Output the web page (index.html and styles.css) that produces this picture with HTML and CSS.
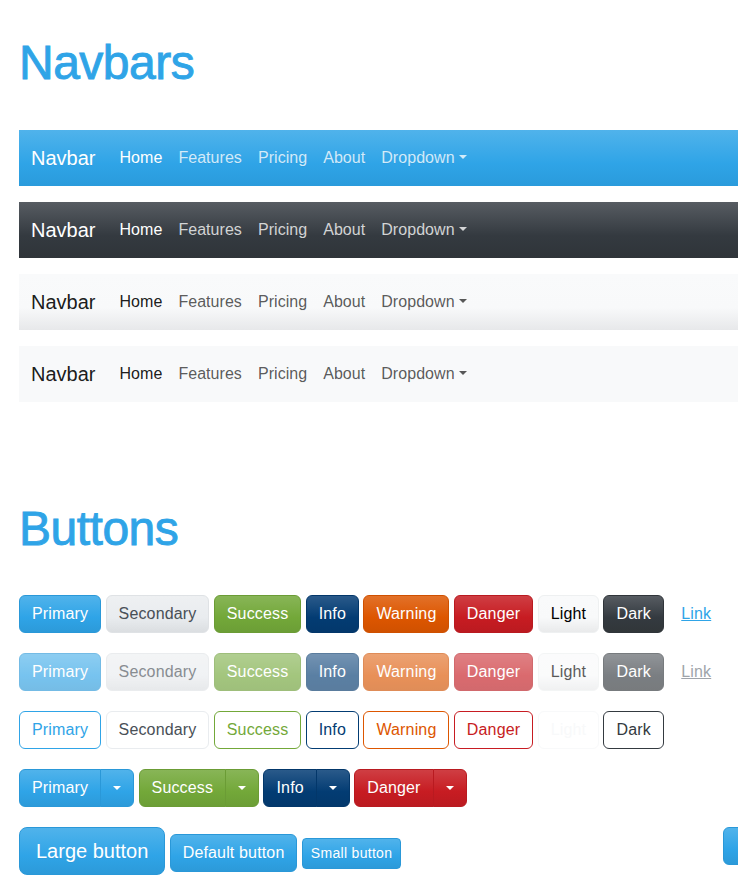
FILE: index.html
```html
<!DOCTYPE html>
<html lang="en">
<head>
<meta charset="utf-8">
<title>Cerulean preview</title>
<link rel="stylesheet" href="styles.css">
</head>
<body>
<div class="page">
  <section class="section">
    <h1 class="page-title">Navbars</h1>

    <nav class="navbar navbar-primary">
      <a class="navbar-brand" href="#">Navbar</a>
      <ul class="nav">
        <li><a class="nav-link active" href="#">Home</a></li>
        <li><a class="nav-link" href="#">Features</a></li>
        <li><a class="nav-link" href="#">Pricing</a></li>
        <li><a class="nav-link" href="#">About</a></li>
        <li><a class="nav-link dropdown-toggle" href="#">Dropdown</a></li>
      </ul>
    </nav>

    <nav class="navbar navbar-darkbg">
      <a class="navbar-brand" href="#">Navbar</a>
      <ul class="nav">
        <li><a class="nav-link active" href="#">Home</a></li>
        <li><a class="nav-link" href="#">Features</a></li>
        <li><a class="nav-link" href="#">Pricing</a></li>
        <li><a class="nav-link" href="#">About</a></li>
        <li><a class="nav-link dropdown-toggle" href="#">Dropdown</a></li>
      </ul>
    </nav>

    <nav class="navbar navbar-lightbg">
      <a class="navbar-brand" href="#">Navbar</a>
      <ul class="nav">
        <li><a class="nav-link active" href="#">Home</a></li>
        <li><a class="nav-link" href="#">Features</a></li>
        <li><a class="nav-link" href="#">Pricing</a></li>
        <li><a class="nav-link" href="#">About</a></li>
        <li><a class="nav-link dropdown-toggle" href="#">Dropdown</a></li>
      </ul>
    </nav>

    <nav class="navbar navbar-plainbg">
      <a class="navbar-brand" href="#">Navbar</a>
      <ul class="nav">
        <li><a class="nav-link active" href="#">Home</a></li>
        <li><a class="nav-link" href="#">Features</a></li>
        <li><a class="nav-link" href="#">Pricing</a></li>
        <li><a class="nav-link" href="#">About</a></li>
        <li><a class="nav-link dropdown-toggle" href="#">Dropdown</a></li>
      </ul>
    </nav>
  </section>

  <section class="section section-buttons">
    <h1 class="page-title">Buttons</h1>

    <div class="btn-row">
      <button type="button" class="btn btn-primary">Primary</button>
      <button type="button" class="btn btn-secondary">Secondary</button>
      <button type="button" class="btn btn-success">Success</button>
      <button type="button" class="btn btn-info">Info</button>
      <button type="button" class="btn btn-warning">Warning</button>
      <button type="button" class="btn btn-danger">Danger</button>
      <button type="button" class="btn btn-light">Light</button>
      <button type="button" class="btn btn-dark">Dark</button>
      <button type="button" class="btn btn-link">Link</button>
    </div>

    <div class="btn-row">
      <button type="button" class="btn btn-primary" disabled>Primary</button>
      <button type="button" class="btn btn-secondary" disabled>Secondary</button>
      <button type="button" class="btn btn-success" disabled>Success</button>
      <button type="button" class="btn btn-info" disabled>Info</button>
      <button type="button" class="btn btn-warning" disabled>Warning</button>
      <button type="button" class="btn btn-danger" disabled>Danger</button>
      <button type="button" class="btn btn-light" disabled>Light</button>
      <button type="button" class="btn btn-dark" disabled>Dark</button>
      <button type="button" class="btn btn-link" disabled>Link</button>
    </div>

    <div class="btn-row">
      <button type="button" class="btn btn-outline-primary">Primary</button>
      <button type="button" class="btn btn-outline-secondary">Secondary</button>
      <button type="button" class="btn btn-outline-success">Success</button>
      <button type="button" class="btn btn-outline-info">Info</button>
      <button type="button" class="btn btn-outline-warning">Warning</button>
      <button type="button" class="btn btn-outline-danger">Danger</button>
      <button type="button" class="btn btn-outline-light">Light</button>
      <button type="button" class="btn btn-outline-dark">Dark</button>
    </div>

    <div class="btn-row btn-row-groups">
      <div class="btn-group">
        <button type="button" class="btn btn-primary">Primary</button>
        <button type="button" class="btn btn-primary btn-split" aria-label="Toggle"></button>
      </div>
      <div class="btn-group">
        <button type="button" class="btn btn-success">Success</button>
        <button type="button" class="btn btn-success btn-split" aria-label="Toggle"></button>
      </div>
      <div class="btn-group">
        <button type="button" class="btn btn-info">Info</button>
        <button type="button" class="btn btn-info btn-split" aria-label="Toggle"></button>
      </div>
      <div class="btn-group">
        <button type="button" class="btn btn-danger">Danger</button>
        <button type="button" class="btn btn-danger btn-split" aria-label="Toggle"></button>
      </div>
    </div>

    <div class="sizes-row">
      <div class="col-main">
        <button type="button" class="btn btn-primary btn-lg">Large button</button>
        <button type="button" class="btn btn-primary">Default button</button>
        <button type="button" class="btn btn-primary btn-sm">Small button</button>
      </div>
      <div class="col-side">
        <button type="button" class="btn btn-primary btn-block">Block button</button>
      </div>
    </div>
  </section>
</div>
</body>
</html>
```
FILE: styles.css
```css
* { box-sizing: border-box; }

html, body {
  margin: 0;
  padding: 0;
  background: #fff;
}

body {
  font-family: "Liberation Sans", Arial, sans-serif;
  font-size: 16px;
  line-height: 1.5;
  color: #495057;
}

.page {
  width: 738px;
  overflow: hidden;
  padding: 2px 0 0 19px;
}

.page-title {
  margin: 0 0 6px;
  padding: 32px 0;
  font-size: 48px;
  font-weight: 500;
  line-height: 1.2;
  letter-spacing: -0.5px;
  color: #2fa4e7;
  -webkit-text-stroke: 0.9px #2fa4e7;
}

.section-buttons {
  margin-top: 66px;
}

/* Navbars */
.navbar {
  display: flex;
  align-items: center;
  width: 780px;
  height: 56px;
  padding: 8px 12px;
  margin-bottom: 16px;
}

.navbar-brand {
  font-size: 20px;
  line-height: 30px;
  padding: 5px 0;
  margin-right: 16px;
  text-decoration: none;
  text-shadow: 0 1px 0 rgba(0, 0, 0, 0.05);
}

.nav {
  display: flex;
  list-style: none;
  margin: 0;
  padding: 0;
}

.nav-link {
  display: block;
  padding: 8px;
  line-height: 24px;
  text-decoration: none;
  letter-spacing: 0.05px;
  text-shadow: 0 1px 0 rgba(0, 0, 0, 0.05);
}

.dropdown-toggle::after {
  content: "";
  display: inline-block;
  margin-left: 4px;
  vertical-align: 4px;
  border-top: 4.8px solid;
  border-left: 4.8px solid transparent;
  border-right: 4.8px solid transparent;
  border-bottom: 0;
}

.navbar-primary {
  background-image: linear-gradient(#50b3eb, #2fa4e7 60%, #2a9bdc);
}
.navbar-darkbg {
  background-image: linear-gradient(#575c62, #343a40 60%, #2f3439);
}
.navbar-primary .navbar-brand,
.navbar-darkbg .navbar-brand,
.navbar-primary .nav-link.active,
.navbar-darkbg .nav-link.active {
  color: #fff;
}
.navbar-primary .nav-link,
.navbar-darkbg .nav-link {
  color: rgba(255, 255, 255, 0.78);
}

.navbar-lightbg {
  background-image: linear-gradient(#f9fafb, #f8f9fa 60%, #e7e8ea);
}
.navbar-plainbg {
  background-color: #f8f9fa;
}
.navbar-lightbg .navbar-brand,
.navbar-plainbg .navbar-brand,
.navbar-lightbg .nav-link.active,
.navbar-plainbg .nav-link.active {
  color: rgba(0, 0, 0, 0.9);
}
.navbar-lightbg .nav-link,
.navbar-plainbg .nav-link {
  color: rgba(0, 0, 0, 0.65);
}

/* Buttons */
.btn-row {
  display: flex;
  align-items: center;
  gap: 4.4px;
  margin-bottom: 20px;
}

.btn {
  display: inline-block;
  font-family: inherit;
  font-size: 16px;
  font-weight: 400;
  line-height: 24px;
  letter-spacing: 0.15px;
  padding: 6px 12px;
  border: 1px solid transparent;
  border-radius: 6px;
  background-color: transparent;
  color: #fff;
  text-align: center;
  white-space: nowrap;
  cursor: pointer;
  text-shadow: 0 1px 0 rgba(0, 0, 0, 0.05);
}

.btn:disabled {
  opacity: 0.65;
  cursor: default;
}

.btn-primary {
  background-image: linear-gradient(#50b3eb, #2fa4e7 60%, #2c9ad9);
  border-color: #2a98d8;
  color: #fff;
}
.btn-secondary {
  background-image: linear-gradient(#eef0f2, #e9ecef 60%, #dbdee1);
  border-color: #dfe2e5;
  color: #495057;
}
.btn-success {
  background-image: linear-gradient(#88b557, #73a839 60%, #6c9e36);
  border-color: #6b9c35;
  color: #fff;
}
.btn-info {
  background-image: linear-gradient(#2a5a8a, #033c73 60%, #03386c);
  border-color: #03376a;
  color: #fff;
}
.btn-warning {
  background-image: linear-gradient(#e27129, #dd5600 60%, #d05100);
  border-color: #cf5000;
  color: #fff;
}
.btn-danger {
  background-image: linear-gradient(#cf3e43, #c71c22 60%, #bb1a20);
  border-color: #b91a20;
  color: #fff;
}
.btn-light {
  background-image: linear-gradient(#f9fafb, #f8f9fa 60%, #e9eaeb);
  border-color: #eef0f1;
  color: #000;
}
.btn-dark {
  background-image: linear-gradient(#575c62, #343a40 60%, #313639);
  border-color: #30353a;
  color: #fff;
}
.btn-link {
  color: #2fa4e7;
  text-decoration: underline;
  border-color: transparent;
  text-shadow: none;
}
.btn-link:disabled {
  color: #6c757d;
}

.btn-outline-primary { color: #2fa4e7; border-color: #2fa4e7; }
.btn-outline-secondary { color: #495057; border-color: #e9ecef; }
.btn-outline-success { color: #73a839; border-color: #73a839; }
.btn-outline-info { color: #033c73; border-color: #033c73; }
.btn-outline-warning { color: #dd5600; border-color: #dd5600; }
.btn-outline-danger { color: #c71c22; border-color: #c71c22; }
.btn-outline-light { color: #f8f9fa; border-color: #f8f9fa; }
.btn-outline-dark { color: #343a40; border-color: #343a40; }
.btn-outline-primary,
.btn-outline-secondary,
.btn-outline-success,
.btn-outline-info,
.btn-outline-warning,
.btn-outline-danger,
.btn-outline-light,
.btn-outline-dark {
  text-shadow: none;
}

.btn-group {
  display: inline-flex;
}
.btn-group > .btn:first-child {
  border-top-right-radius: 0;
  border-bottom-right-radius: 0;
}
.btn-split {
  margin-left: -1px;
  width: 34px;
  padding-left: 0;
  padding-right: 0;
  border-top-left-radius: 0;
  border-bottom-left-radius: 0;
}
.btn-split::after {
  content: "";
  display: inline-block;
  vertical-align: 3px;
  border-top: 4.8px solid;
  border-left: 4.8px solid transparent;
  border-right: 4.8px solid transparent;
  border-bottom: 0;
}

.sizes-row {
  display: flex;
  align-items: flex-start;
}
.col-main {
  flex: none;
  width: 704px;
  display: flex;
  align-items: baseline;
  gap: 4.4px;
}
.col-side {
  flex: none;
  width: 300px;
  display: flex;
  flex-direction: column;
}

.btn-lg {
  font-size: 20px;
  line-height: 30px;
  letter-spacing: 0;
  padding: 8px 16px;
  border-radius: 8px;
}
.btn-sm {
  font-size: 14px;
  line-height: 21px;
  letter-spacing: 0.3px;
  padding: 4px 8px;
  border-radius: 4px;
}
.btn-block {
  width: 100%;
}
```
